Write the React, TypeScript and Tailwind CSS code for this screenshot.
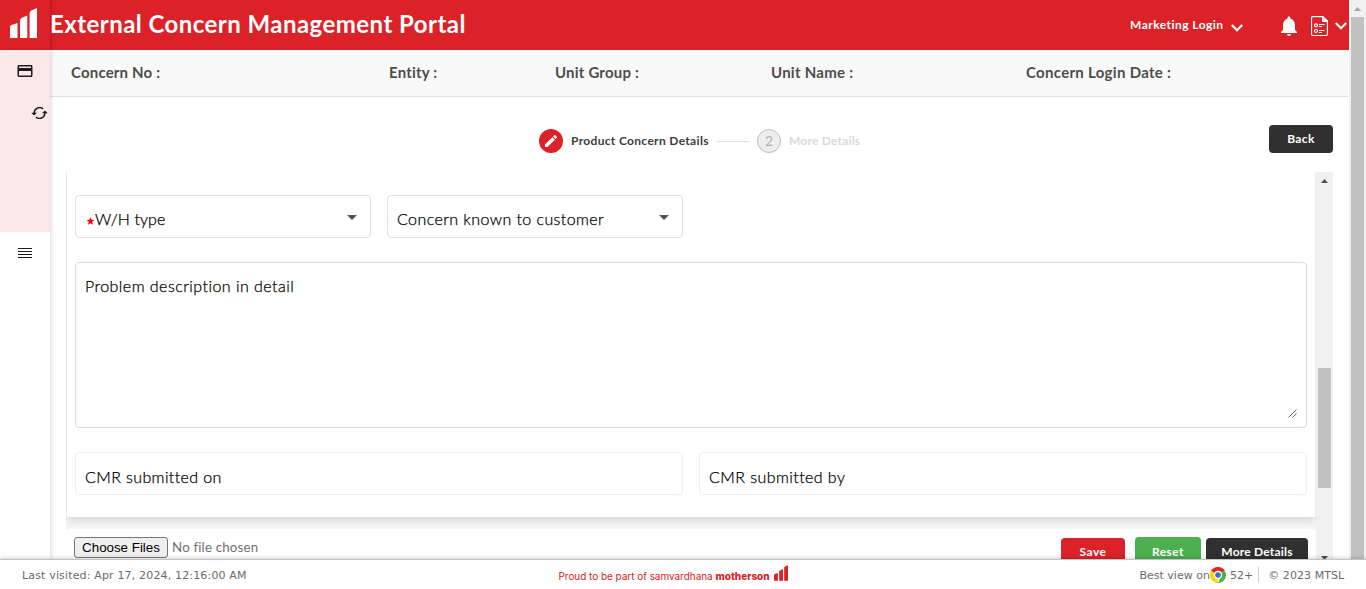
import React from "react";
import { MdCreditCard, MdEdit, MdNotifications, MdArrowDropDown } from "react-icons/md";

function Bars({ className }: { className: string }) {
  return (
    <svg viewBox="0 0 27 30" className={className} fill="currentColor">
      <path d="M0 18.800Q.2 17.400 1.500 16.900L7.500 15V30H0Z" />
      <path d="M10 12.300Q10.200 10.700 11.500 10L17.300 7.500V30H10Z" />
      <path d="M19.600 5.300Q19.800 3.300 21.300 2.500L27 0V30H19.600Z" />
    </svg>
  );
}

function Chevron({ className }: { className: string }) {
  return (
    <svg viewBox="0 0 12 8" className={className} fill="none" stroke="currentColor" strokeWidth="2.200">
      <path d="M0.800 1 6 6.200 11.200 1" />
    </svg>
  );
}

function SyncIcon({ className }: { className: string }) {
  return (
    <svg viewBox="0 0 17 12" className={className} fill="none" stroke="currentColor" strokeWidth="1.500">
      <path d="M3.200 6A5.300 5.300 0 0 1 12 1.900M13.800 6A5.300 5.300 0 0 1 5 10.100" />
      <path d="M.2 5.700H6L3.100 8.500ZM11 6.300H16.800L13.900 3.500Z" fill="currentColor" stroke="none" />
    </svg>
  );
}

function ReportIcon() {
  return (
    <svg viewBox="0 0 17 20" className="h-5 w-[17px]" fill="none" stroke="currentColor">
      <path d="M2 .6H12L16.400 5v13a1.500 1.500 0 0 1-1.500 1.500H2A1.500 1.500 0 0 1 .5 18V2A1.500 1.500 0 0 1 2 .6Z" strokeWidth="1.200" />
      <path d="M11.500 .6V5.500h5Z" fill="currentColor" />
      <circle cx="5" cy="9.300" r="1.500" strokeWidth="1.200" />
      <circle cx="5" cy="15" r="1.500" strokeWidth="1.200" />
      <path d="M8 8.500H13.500M8 10.500h3M8 14.500H13.500M8 16.500h3" strokeWidth="1.200" />
    </svg>
  );
}

function ChromeLogo() {
  return (
    <svg viewBox="0 0 16 16" className="h-4 w-4">
      <path d="M8 8 1.070 4A8 8 0 0 1 14.930 4Z" fill="#e3251d" />
      <path d="M8 8V16A8 8 0 0 1 1.070 4Z" fill="#fdd20a" />
      <path d="M8 4.500H15.200A8 8 0 0 1 8 16L11 9.700Z" fill="#4caf50" />
      <circle cx="8" cy="8" r="4.200" fill="#fff" />
      <circle cx="8" cy="8" r="2.800" fill="#3277bc" />
    </svg>
  );
}

function SelectField({ children }: { children: React.ReactNode }) {
  return (
    <div className="flex h-[43px] w-[296px] items-center justify-between rounded border border-[#e0e0e0] pl-[9px] pr-[6px]">
      <div className="flex items-center pt-[5px]">{children}</div>
      <MdArrowDropDown className="h-6 w-6 text-[#545454]" />
    </div>
  );
}

export default function App() {
  return (
    <div className="flex h-[589px] w-[1366px] flex-col overflow-hidden bg-white font-['Lato',sans-serif] text-black">
      <div className="flex h-[559px] shrink-0 overflow-hidden">
        <div className="flex w-[1349px] flex-col">
          <header className="flex h-[50px] shrink-0 items-center bg-[#db2228] text-white">
            <div className="flex h-[50px] w-[50px] items-center pl-[10px] pb-[4px] shadow-[1px_0_3px_rgba(0,0,0,0.25)]">
              <Bars className="h-[30px] w-[27px]" />
            </div>
            <h1 className="w-[1080px] whitespace-nowrap pb-[3px] text-2xl font-bold tracking-[0.45px]">
              External Concern Management Portal
            </h1>
            <span className="w-[101px] whitespace-nowrap text-xs font-bold tracking-[0.46px]">Marketing Login</span>
            <Chevron className="mt-[6px] h-2 w-3" />
            <MdNotifications className="ml-[34px] mt-[2px] h-[24px] w-[24px]" />
            <span className="ml-[10px] mt-[2px]"><ReportIcon /></span>
            <Chevron className="ml-[7px] mt-[2px] h-2 w-3" />
          </header>

          <div className="flex h-[509px]">
            <aside className="relative z-10 w-[50px] shrink-0 bg-white text-[#1d1d1d] shadow-[1px_0_4px_rgba(0,0,0,0.16)]">
              <div className="flex h-[182px] flex-col bg-[#fbe8e9]">
                <MdCreditCard className="ml-4 mt-3 h-[18px] w-[18px]" />
                <SyncIcon className="ml-[30.500px] mt-[27px] h-3 w-[17px]" />
              </div>
              <div className="ml-[18px] mt-[16px] flex w-[14px] flex-col gap-[2px]">
                <i className="h-px bg-current" />
                <i className="h-px bg-current" />
                <i className="h-px bg-current" />
                <i className="h-px bg-current" />
              </div>
            </aside>

            <main className="flex w-[1299px] flex-col">
              <div className="mr-px flex h-[47px] shrink-0 whitespace-nowrap border-b border-[#dee0e4] bg-[#f9f9f9] pl-[21px] text-[15px] font-bold leading-[44px] text-[#4d4d4d]">
                <span className="w-[318px] tracking-[0.18px]">Concern No :</span>
                <span className="w-[166px] tracking-[0.2px]">Entity :</span>
                <span className="w-[216px] tracking-[0.2px]">Unit Group :</span>
                <span className="w-[255px] tracking-[0.26px]">Unit Name :</span>
                <span className="tracking-[0.3px]">Concern Login Date :</span>
              </div>

              <div className="flex h-[75px] shrink-0 pt-[28px] text-xs font-bold">
                <div className="flex h-8 w-[1219px] items-center whitespace-nowrap pl-[489px]">
                  <span className="flex h-6 w-6 items-center justify-center rounded-full bg-[#db2228] text-white">
                    <MdEdit className="h-4 w-4" />
                  </span>
                  <span className="ml-2 w-[146px] tracking-[0.33px] text-[#3d3d3d]">Product Concern Details</span>
                  <span className="mr-2 h-px w-8 bg-[#dddddd]" />
                  <span className="flex h-6 w-6 items-center justify-center rounded-full border border-[#bdbdbd] bg-[#eeeeee] text-sm font-normal text-[#b0b0b0]">
                    2
                  </span>
                  <span className="ml-2 tracking-[0.2px] text-[#d9d9d9]">More Details</span>
                </div>
                <button className="h-7 w-16 rounded bg-[#303030] text-xs font-bold tracking-[0.4px] text-white">Back</button>
              </div>

              <div className="ml-4 flex h-[387px]">
                <div className="w-[1250px] overflow-hidden bg-[#f6f6f6]">
                  <section className="h-[345px] w-[1249px] border-l border-[#eaeaea] bg-white pl-2 pt-[23px] shadow-[0_4px_8px_rgba(0,0,0,0.12)]">
                    <div className="flex gap-4 whitespace-nowrap text-base font-light leading-5 [-webkit-text-stroke:0.25px_#000]">
                      <SelectField>
                        <svg viewBox="0 0 24 24" className="ml-px mt-[3px] h-2 w-[9px] text-[#ff0000]" fill="currentColor">
                          <path d="M12 0 15.200 8.500 24 9 17 14.600 19.500 23.500 12 18.500 4.500 23.500 7 14.600 0 9 8.800 8.500Z" />
                        </svg>
                        <span className="tracking-[0.1px]">W/H type</span>
                      </SelectField>
                      <SelectField>
                        <span className="tracking-[0.42px]">Concern known to customer</span>
                      </SelectField>
                    </div>
                    <div className="mt-6 flex h-[166px] w-[1232px] justify-between rounded border border-[#dcdcdc] pl-[9px] pr-[9px] pt-[13px] text-base font-light leading-5">
                      <span className="tracking-[0.46px] [-webkit-text-stroke:0.25px_#000]">Problem description in detail</span>
                      <svg viewBox="0 0 9 9" className="mb-[9px] h-[9px] w-[9px] self-end" stroke="#555" strokeWidth="0.900">
                        <path d="M.5 8.500 8.500 .5M4.500 8.500 8.500 4.500" />
                      </svg>
                    </div>
                    <div className="mt-6 flex gap-4 text-base font-light leading-5 [-webkit-text-stroke:0.25px_#000]">
                      <div className="h-[43px] w-[608px] rounded border border-[#f0f0f0] pl-[9px] pt-[14px] tracking-[0.4px]">CMR submitted on</div>
                      <div className="h-[43px] w-[608px] rounded border border-[#f0f0f0] pl-[9px] pt-[14px] tracking-[0.44px]">CMR submitted by</div>
                    </div>
                  </section>
                  <section className="mt-3 flex h-[60px] w-[1250px] rounded-t bg-white pl-2">
                    <div className="flex w-[987px] items-start pt-2">
                      <button className="h-[21px] w-[94px] rounded-[3px] border border-[#767676] bg-[#efefef] font-['Liberation_Sans',sans-serif] text-[13.333px] leading-[19px]">
                        Choose Files
                      </button>
                      <span className="ml-1 text-[13.333px] leading-[21px] tracking-[0.16px] text-[#707070]">No file chosen</span>
                    </div>
                    <button className="mt-[9px] h-7 w-16 rounded bg-[#db2228] text-xs font-bold tracking-[0.45px] text-white">Save</button>
                    <button className="ml-[10px] mt-2 h-[30px] w-[66px] rounded bg-[#4caf50] text-xs font-bold tracking-[0.4px] text-white">Reset</button>
                    <button className="ml-[5px] mt-[9px] h-7 w-[102px] rounded bg-[#303030] text-xs font-bold tracking-[0.2px] text-white">More Details</button>
                  </section>
                </div>
                <div className="z-10 flex w-[17px] flex-col items-center bg-[#f1f1f1]">
                  <svg viewBox="0 0 7 4" className="mt-[7px] h-1 w-[7px] shrink-0" fill="#505050"><path d="M0 4 3.500 0 7 4Z" /></svg>
                  <div className="mt-[185px] h-[120px] w-[13px] shrink-0 bg-[#c1c1c1]" />
                  <svg viewBox="0 0 7 4" className="mt-[68px] h-1 w-[7px] shrink-0" fill="#505050"><path d="M0 0H7L3.500 4Z" /></svg>
                </div>
              </div>
            </main>
          </div>
        </div>

        <div className="flex w-[17px] flex-col items-center bg-[#f1f1f1]">
          <svg viewBox="0 0 7 4" className="mt-[7px] h-1 w-[7px] shrink-0" fill="#a3a3a3"><path d="M0 4 3.500 0 7 4Z" /></svg>
          <div className="mt-[6px] h-[542px] w-[13px] shrink-0 bg-[#c1c1c1]" />
        </div>
      </div>

      <footer className="z-20 flex h-[30px] shrink-0 whitespace-nowrap border-t border-[#c4c4c4] bg-white pl-[22px] font-['DejaVu_Sans',sans-serif] text-[11px] leading-[31px] text-[#6b6b6b] shadow-[0_0_5px_rgba(0,0,0,0.25)]">
        <span className="w-[536.500px] tracking-[0.16px]">Last visited: Apr 17, 2024, 12:16:00 AM</span>
        <span className="flex w-[581px] font-['Inter',sans-serif] text-[10px] leading-[33px] text-[#db2228]">
          <span className="w-[157px] tracking-[-0.04px]">Proud to be part of samvardhana</span>
          <span className="w-[58px] font-extrabold">motherson</span>
          <Bars className="mt-[5px] h-4 w-[14px]" />
        </span>
        <span className="w-[70.500px]">Best view on</span>
        <span className="mt-[7px]"><ChromeLogo /></span>
        <span className="ml-1">52+</span>
        <span className="ml-[5px] mt-[7px] h-4 w-px bg-[#cfcfcf]" />
        <span className="ml-[9px] tracking-[0.06px]">© 2023 MTSL</span>
      </footer>
    </div>
  );
}
